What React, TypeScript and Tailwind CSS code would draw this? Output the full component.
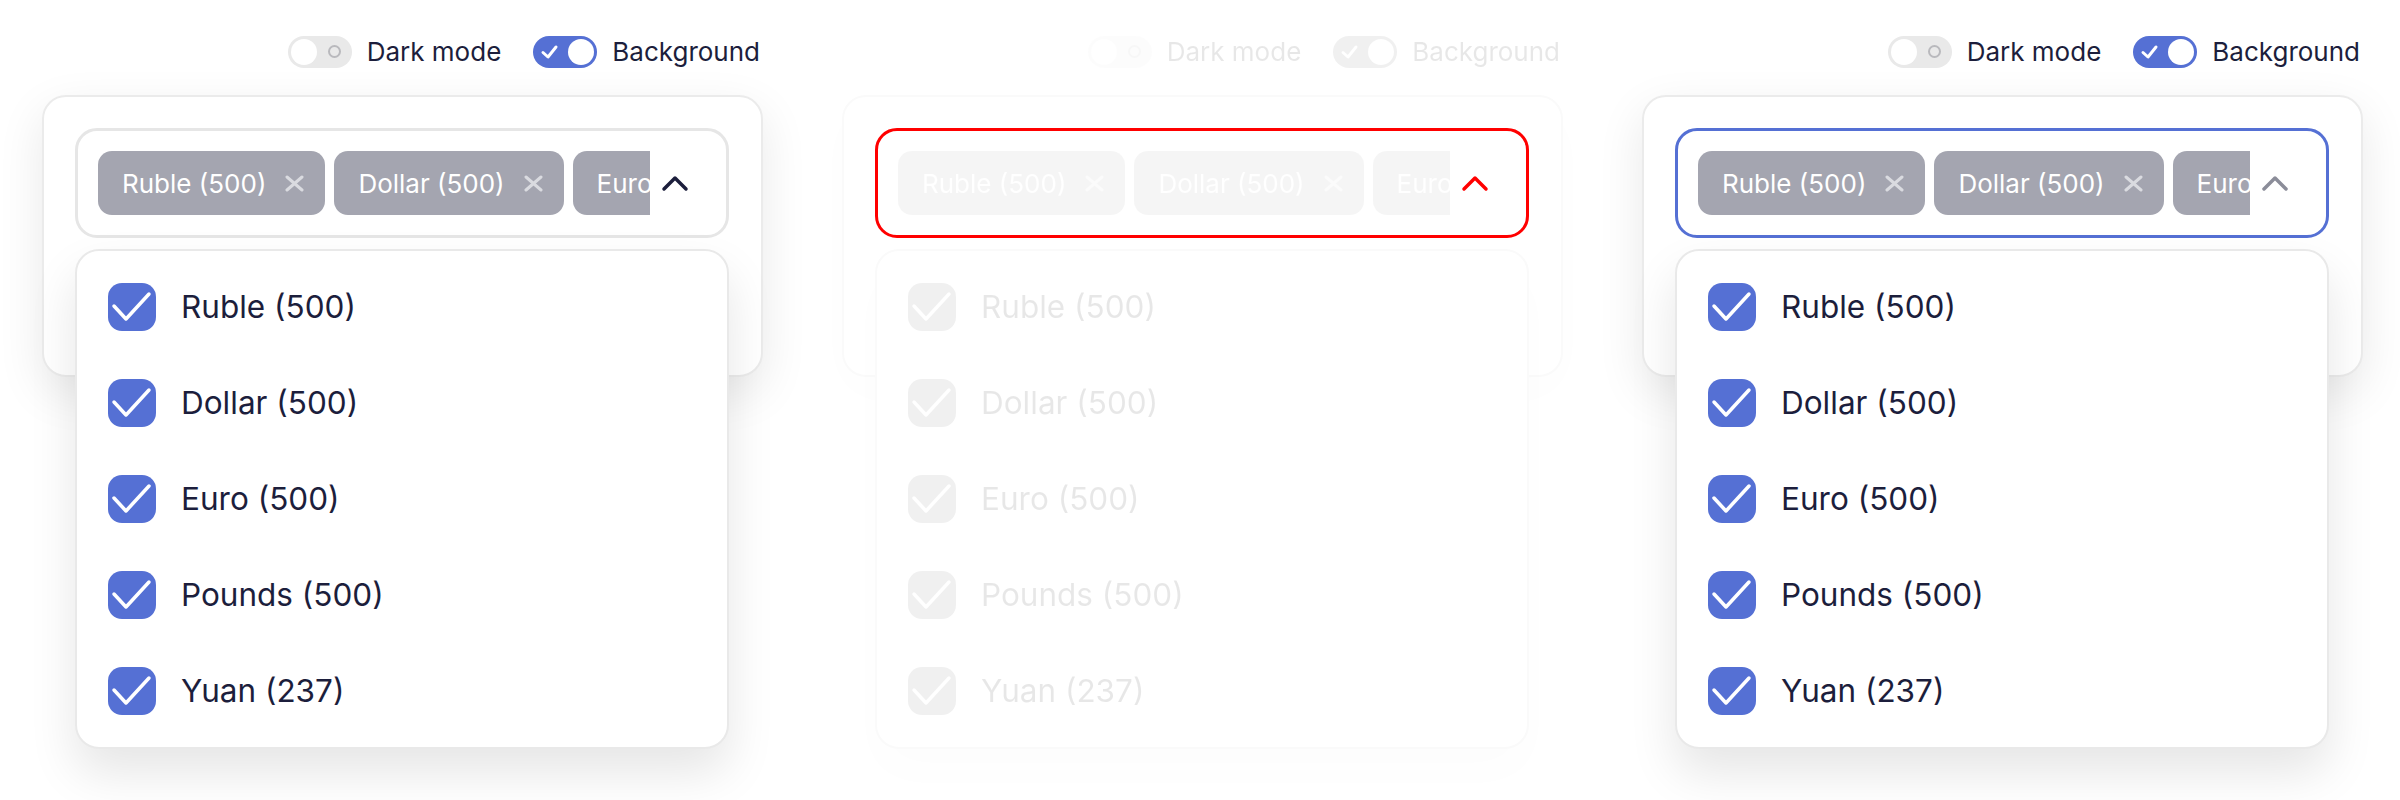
import React from 'react';

type Variant = 'default' | 'faded' | 'focus';

const items = ['Ruble (500)', 'Dollar (500)', 'Euro (500)', 'Pounds (500)', 'Yuan (237)'];
const chips = ['Ruble (500)', 'Dollar (500)', 'Euro (500)'];

function Toggle({ on }: { on: boolean }) {
  if (on) {
    return (
      <span className="flex h-[32px] w-[64px] items-center rounded-full bg-[#5570d4] px-[3px]">
        <svg width="20" height="16" viewBox="0 0 20 16" className="ml-[4px]">
          <path d="M3 8.5 L8 13 L16 3" fill="none" stroke="#fff" strokeWidth="3" strokeLinecap="round" strokeLinejoin="round" />
        </svg>
        <span className="ml-auto h-[26px] w-[26px] rounded-full bg-white" />
      </span>
    );
  }
  return (
    <span className="flex h-[32px] w-[64px] items-center rounded-full bg-[#e9e9e9] px-[3px]">
      <span className="h-[26px] w-[26px] rounded-full bg-white" />
      <span className="ml-auto mr-[8px] h-[13px] w-[13px] rounded-full border-2 border-[#b9b9bd]" />
    </span>
  );
}

function Check() {
  return (
    <span className="flex h-[48px] w-[48px] shrink-0 items-center justify-center rounded-[14px] bg-[#5570d4]">
      <svg width="48" height="48" viewBox="0 0 48 48">
        <path d="M6 23 L18 36 L41 11" fill="none" stroke="#fff" strokeWidth="3.5" strokeLinecap="round" strokeLinejoin="round" />
      </svg>
    </span>
  );
}

function Chip({ label }: { label: string }) {
  return (
    <span className="flex h-[64px] shrink-0 items-center gap-[18px] whitespace-nowrap rounded-[14px] bg-[#a4a5b0] pl-[24px] pr-[20px] text-[26px] text-white">
      {label}
      <svg width="21" height="17" viewBox="0 0 21 17">
        <path d="M3 2 L18 15 M18 2 L3 15" stroke="#dadbe0" strokeWidth="3" strokeLinecap="round" />
      </svg>
    </span>
  );
}

function Panel({ variant }: { variant: Variant }) {
  const faded = variant === 'faded';
  const fade = faded ? 'opacity-[0.1] grayscale' : '';
  const selectBorder =
    variant === 'faded' ? 'border-[#ff0000]' : variant === 'focus' ? 'border-[#5570d4]' : 'border-[#e6e6e6]';
  const chevron = variant === 'faded' ? '#ff0000' : variant === 'focus' ? '#8b8d99' : '#1c1e3c';

  return (
    <div className="flex w-[800px] shrink-0 flex-col pl-[42px] pt-[35px]">
      <div className={`flex h-[33px] w-[718px] items-center justify-end ${fade}`}>
        <Toggle on={false} />
        <span className="ml-[15px] text-[26px] text-[#1c1e3c]">Dark mode</span>
        <span className="ml-[32px]">
          <Toggle on />
        </span>
        <span className="ml-[15px] text-[26px] text-[#1c1e3c]">Background</span>
      </div>

      <div
        className={`relative mt-[27px] h-[282px] w-[721px] rounded-[24px] border-2 bg-white p-[31px] ${
          faded ? 'border-[#fafafa] shadow-[0_16px_48px_rgba(0,0,0,0.012)]' : 'border-[#ebebeb] shadow-[0_16px_48px_rgba(0,0,0,0.09)]'
        }`}
      >
        <div className={`flex h-[110px] w-[654px] items-center rounded-[22px] border-[3px] bg-white pl-[20px] ${selectBorder}`}>
          <div className={`flex w-[552px] gap-[9px] overflow-hidden ${fade}`}>
            {chips.map((c) => (
              <Chip key={c} label={c} />
            ))}
          </div>
          <svg width="28" height="18" viewBox="0 0 28 18" className="ml-[11px]">
            <path d="M3 15 L14 4 L25 15" fill="none" stroke={chevron} strokeWidth="3.5" strokeLinecap="round" strokeLinejoin="round" />
          </svg>
        </div>

        <div
          className={`absolute left-[31px] top-[152px] z-10 flex w-[654px] flex-col rounded-[24px] border-2 bg-white py-[8px] pl-[31px] ${
            faded ? 'border-[#fafafa] shadow-[0_24px_48px_rgba(0,0,0,0.012)]' : 'border-[#e9e9e9] shadow-[0_24px_48px_rgba(0,0,0,0.10)]'
          }`}
        >
          {items.map((it) => (
            <div key={it} className={`flex h-[96px] items-center gap-[25px] ${fade}`}>
              <Check />
              <span className="text-[31.5px] text-[#1c1e3c]">{it}</span>
            </div>
          ))}
        </div>
      </div>
    </div>
  );
}

export default function App() {
  return (
    <div className="flex h-[800px] w-[2400px] overflow-hidden bg-white" style={{ fontFamily: 'Inter, "Noto Sans", sans-serif' }}>
      <Panel variant="default" />
      <Panel variant="faded" />
      <Panel variant="focus" />
    </div>
  );
}
